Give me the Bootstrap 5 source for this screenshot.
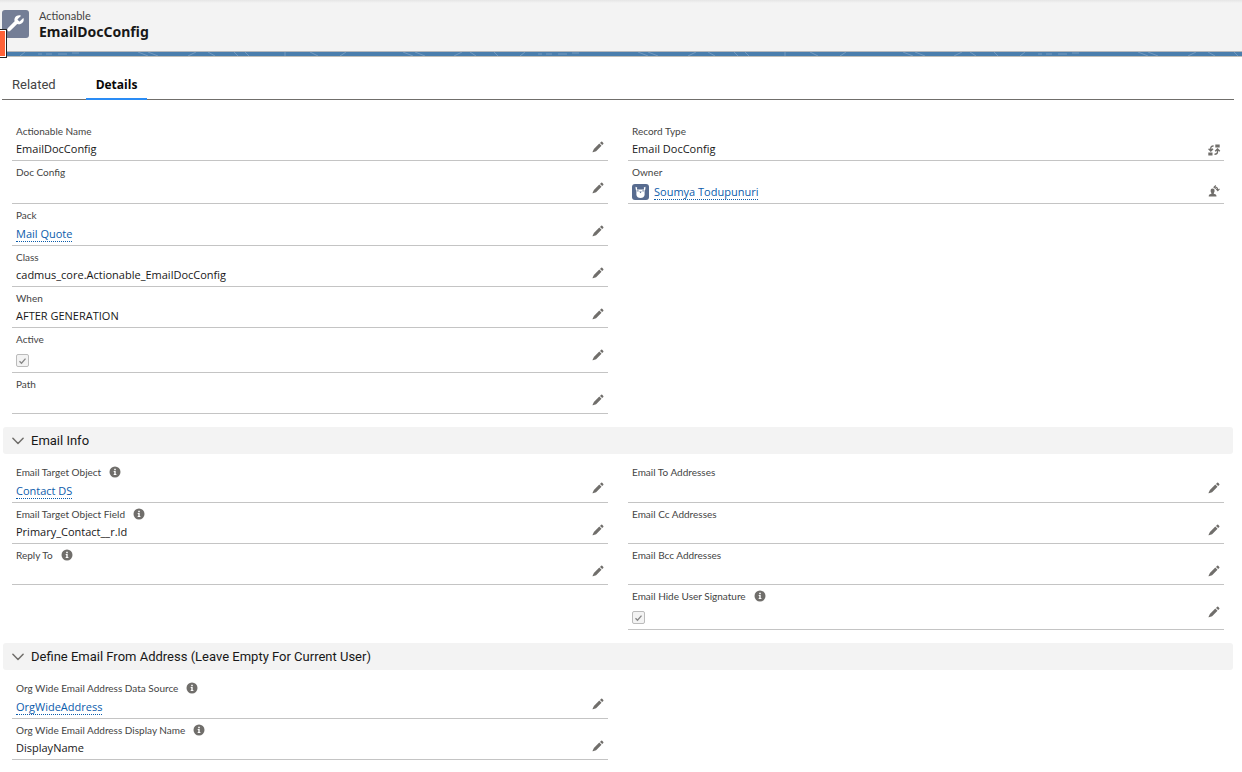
<!DOCTYPE html>
<html lang="en">
<head>
<meta charset="utf-8">
<meta name="viewport" content="width=device-width, initial-scale=1">
<title>EmailDocConfig | Actionable</title>
<link href="https://cdn.jsdelivr.net/npm/bootstrap@5.3.0/dist/css/bootstrap.min.css" rel="stylesheet">
<style>
  body { font-family: "Open Sans", "Noto Sans", sans-serif; font-size: 11px; line-height: 16px; color: #181818; }
  a { color: #0b5cab; }

  /* Record header */
  .record-head { height: 52px; gap: 10px; padding: 9px 2px; background: linear-gradient(#e5e5e5, #f3f3f3 3px); border-bottom: 1px solid #b5b8bc; }
  .record-icon { width: 27px; height: 28px; margin-top: 1px; border-radius: 3px; background: #747e96; }
  .entity-name { font: 11px/14px Lato, sans-serif; color: #444; }
  .record-title { font: bold 14px/17px "Noto Sans", sans-serif; }
  .side-flag { top: 29px; left: 0; width: 7px; height: 29px; background: #ff6238; border: solid #222; border-width: 1px 1px 1px 0; box-shadow: inset -1px 1px #fff, inset 0 -1px #fff; }
  .banner { height: 5px; background: #4a7ead; border-bottom: 1px solid #bfbfba; }

  /* Tabs */
  .record-tabs { margin: 14px 8px 0 2px; height: 29px; border-bottom: 1px solid #706e6b; }
  .record-tabs .nav-link { height: 29px; padding: 5px 10px 4px; border: 0; border-bottom: 2px solid transparent; border-radius: 0; font: 13px/18px Roboto, sans-serif; color: #444; }
  .record-tabs .nav-item + .nav-item { margin-left: 20px; }
  .record-tabs .nav-link.active { border-color: #2a8cf5; background: none; color: #080707; font: bold 12px/18px "Open Sans", sans-serif; }

  /* Field grid */
  .field-grid { grid-template-columns: 1fr 1fr; column-gap: 20px; padding: 0 18px 0 12px; margin-bottom: 13px; }
  .field-cell { min-height: 41px; padding: 4px 30px 0 4px; border-bottom: 1px solid #c4c4c4; }
  .with-link { min-height: 42px; }
  .with-owner { min-height: 43px; }
  .with-check { min-height: 45px; }
  .right-col { grid-column: 2; }
  .left-col { grid-column: 1; }
  .field-label { display: flex; align-items: center; gap: 8px; height: 14px; font: 10px/14px Lato, sans-serif; color: #444; }
  .field-value { margin-top: 3px; min-height: 16px; }
  .with-link .field-value, .with-owner .field-value { margin-top: 5px; line-height: 14px; min-height: 14px; }
  .field-value a { display: inline-block; text-decoration: none; border-bottom: 1px dotted #0b5cab; }
  .info-btn, .edit-btn { padding: 0; border: 0; background: none; color: #706e6b; line-height: 0; }
  .edit-btn { top: 20px; right: 3px; width: 14px; height: 14px; }
  .edit-btn.is-change { top: 23px; }
  .record-check { display: block; width: 13px; height: 13px; margin: 8px 0 0; border: 1px solid #c4c4c4; border-radius: 2px; background-color: #f3f3f3; }
  .field-value .record-check[type=checkbox] { border-radius: 2px; }
  .record-check:checked { border-color: #bbb; background: #f3f3f3 url("data:image/svg+xml,%3Csvg xmlns='http://www.w3.org/2000/svg' viewBox='0 0 11 11'%3E%3Cpath fill='none' stroke='%23858585' stroke-width='1.3' d='M2.5 6.2 4.5 8.2 8.5 3.6'/%3E%3C/svg%3E") center/11px 11px no-repeat; }
  .record-check:disabled { opacity: 1; }
  .owner-line { gap: 5px; }
  .avatar { width: 17px; height: 16px; border-radius: 3px; background: #576b8f; }

  /* Section headings */
  .section-head { margin: 0 9px 7px 3px; }
  .section-head button { height: 27px; padding: 0 9px; gap: 7px; border: 0; border-radius: 3px; background: #f3f3f3; color: #181818; font: 13px/27px Roboto, sans-serif; }
</style>
</head>
<body>

<svg class="d-none" aria-hidden="true">
  <symbol id="i-pencil" viewBox="0 0 14 14"><path fill="currentColor" d="M2.9 9 8.3 3.600 10.500 5.800 5.100 11.200 1.900 12.300Q1.400 12.400 1.500 11.900ZM9 2.900 10.200 1.800Q10.700 1.400 11.200 1.800L12.300 2.900Q12.700 3.400 12.300 3.900L11.200 5.100Z"/></symbol>
  <symbol id="i-info" viewBox="0 0 12 12"><circle cx="6" cy="6" r="5.5" fill="currentColor"/><path fill="#fff" d="M5.2 2.8h1.6v1.5H5.2zM4.7 5.1h2v3h.7v1H4.7v-1h.6V6.1h-.6z"/></symbol>
  <symbol id="i-chevron" viewBox="0 0 12 12"><path fill="none" stroke="#706e6b" stroke-width="1.5" stroke-linecap="round" stroke-linejoin="round" d="M.9 3.3 6 8.500l5.100-5.200"/></symbol>
</svg>

<header class="position-relative">
  <div class="record-head d-flex">
    <div class="record-icon flex-shrink-0">
      <svg width="27" height="27" viewBox="0 0 27 27" aria-hidden="true"><path fill="#fff" d="M21 8.2 17.9 11.2Q17.4 11.7 16.8 11.1L15.8 10.1Q15.3 9.6 15.8 9L18.9 6Q19.1 5.6 18.6 5.5C14.8 4.4 11.6 7.7 12.6 11.3L5.7 18.3Q4.6 19.4 5.7 20.7 6.9 22 8.3 20.8L15.2 14C19 15.2 22.5 12 21.6 8.4Q21.4 7.8 21 8.2Z"/></svg>
    </div>
    <div>
      <div class="entity-name">Actionable</div>
      <h1 class="record-title mb-0">EmailDocConfig</h1>
    </div>
  </div>
  <svg class="banner d-block w-100" aria-hidden="true">
    <defs><pattern id="banner-lines" width="500" height="4" patternUnits="userSpaceOnUse"><path fill="none" stroke="#7299bf" d="M20 4l5-4M38 2h4M46 2h6M58 2h9M72 1h7M138 0l10 4M148 0l10 4M188 4l8-4M208 0l7 4M234 0l4 4M245 0l4 4M285 0v4M310 0l8 4M340 4l6-4M403 0l10 4M415 0l10 4M454 4l8-4M470 0l6 4M494 0l4 4"/></pattern></defs>
    <rect width="100%" height="4" fill="url(#banner-lines)"/>
  </svg>
  <div class="side-flag position-absolute"></div>
</header>

<ul class="nav nav-tabs record-tabs" role="tablist">
  <li class="nav-item"><a class="nav-link" href="#related" role="tab">Related</a></li>
  <li class="nav-item"><a class="nav-link active" href="#details" role="tab" aria-selected="true">Details</a></li>
</ul>

<main id="details">
  <section class="field-grid d-grid pt-3 mt-1" data-fields="record"></section>

  <h2 class="section-head"><button type="button" class="d-flex align-items-center w-100" aria-expanded="true"><svg width="12" height="12"><use href="#i-chevron"/></svg>Email Info</button></h2>
  <section class="field-grid d-grid" data-fields="email"></section>

  <h2 class="section-head"><button type="button" class="d-flex align-items-center w-100" aria-expanded="true"><svg width="12" height="12"><use href="#i-chevron"/></svg>Define Email From Address (Leave Empty For Current User)</button></h2>
  <section class="field-grid d-grid mb-0" data-fields="sender"></section>
</main>

<script src="https://cdn.jsdelivr.net/npm/bootstrap@5.3.0/dist/js/bootstrap.bundle.min.js"></script>
<script>
  const editIcons = {
    pencil: '<svg width="14" height="14"><use href="#i-pencil"/></svg>',
    swap: '<svg width="14" height="14" viewBox="0 0 14 14"><path fill="currentColor" d="M8.3 1.500h4.400v3H8.300zM1.300 9.500h4.200v3H1.300z"/><path fill="none" stroke="currentColor" stroke-width="1.400" d="M6.600 3Q3.800 2.800 3.800 5.200V7.200M1.600 5.700 3.800 8 6 5.700M7.500 11.200Q10.500 11.300 10.500 8.800V7M8.200 8.300 10.500 6 12.800 8.300"/></svg>',
    owner: '<svg width="14" height="14" viewBox="0 0 14 14"><path fill="currentColor" d="M5.6 4.5a2 2 0 0 1 2 2.2q0 1.4-.8 2.2v.8l2 .9q.7.4.7 1.9H1.700q0-1.500.7-1.900l2-.9v-.8q-.8-.8-.8-2.200a2 2 0 0 1 2-2.200z"/><path fill="none" stroke="currentColor" stroke-width="1.100" d="M7.200 3.200Q10.500 2.400 10.800 6M9.200 4.800l1.600 1.800 1.700-1.800M8.800 1.500 7 3.200l1.800 1.500"/></svg>'
  };
  const avatar = '<svg class="avatar" viewBox="0 0 17 16" aria-hidden="true"><path fill="#fff" d="M3.500 2.800 5.200 3.500 4.900 5.400H12.100L11.800 3.500 13.500 2.800 13.300 5.600 12.600 6.500V11Q12 14 8.500 14T4.400 11V6.500L3.700 5.600Z"/><path fill="#576b8f" d="M5.300 6.300H6.500V7.500H5.300zM10.500 6.300h1.200v1.200h-1.200zM7.200 7.500h2.600L8.500 9.300z"/></svg>';
  const groups = {
    record: [
      { label: 'Actionable Name', text: 'EmailDocConfig' },
      { label: 'Record Type', text: 'Email DocConfig', right: true, icon: 'swap' },
      { label: 'Doc Config' },
      { label: 'Owner', owner: 'Soumya Todupunuri', right: true, icon: 'owner' },
      { label: 'Pack', link: 'Mail Quote' },
      { label: 'Class', text: 'cadmus_core.Actionable_EmailDocConfig' },
      { label: 'When', text: 'AFTER GENERATION' },
      { label: 'Active', check: true },
      { label: 'Path' }
    ],
    email: [
      { label: 'Email Target Object', info: true, link: 'Contact DS' },
      { label: 'Email To Addresses', right: true },
      { label: 'Email Target Object Field', info: true, text: 'Primary_Contact__r.Id' },
      { label: 'Email Cc Addresses', right: true },
      { label: 'Reply To', info: true },
      { label: 'Email Bcc Addresses', right: true },
      { label: 'Email Hide User Signature', info: true, check: true, right: true }
    ],
    sender: [
      { label: 'Org Wide Email Address Data Source', info: true, link: 'OrgWideAddress' },
      { label: 'Org Wide Email Address Display Name', info: true, text: 'DisplayName' }
    ]
  };
  function fieldCell(f, id) {
    const kind = f.owner ? 'with-owner' : f.link ? 'with-link' : f.check ? 'with-check' : '';
    const name = f.check ? `<label for="${id}">${f.label}</label>` : `<span>${f.label}</span>`;
    const info = f.info ? `<button type="button" class="info-btn" aria-label="Help: ${f.label}"><svg width="12" height="12"><use href="#i-info"/></svg></button>` : '';
    const value = f.check ? `<input id="${id}" type="checkbox" class="form-check-input record-check" checked disabled>`
      : f.owner ? `<span class="owner-line d-flex align-items-center">${avatar}<a href="#owner">${f.owner}</a></span>`
      : f.link ? `<a href="#record">${f.link}</a>` : (f.text || '');
    return `<div class="field-cell position-relative ${kind} ${f.right ? 'right-col' : 'left-col'}">
      <div class="field-label">${name}${info}</div><div class="field-value">${value}</div>
      <button type="button" class="edit-btn position-absolute ${f.icon ? 'is-change' : ''}" aria-label="Edit ${f.label}">${editIcons[f.icon || 'pencil']}</button></div>`;
  }
  for (const [key, fields] of Object.entries(groups)) {
    document.querySelector(`[data-fields="${key}"]`).innerHTML = fields.map((f, i) => fieldCell(f, key + i)).join('');
  }
</script>
</body>
</html>
